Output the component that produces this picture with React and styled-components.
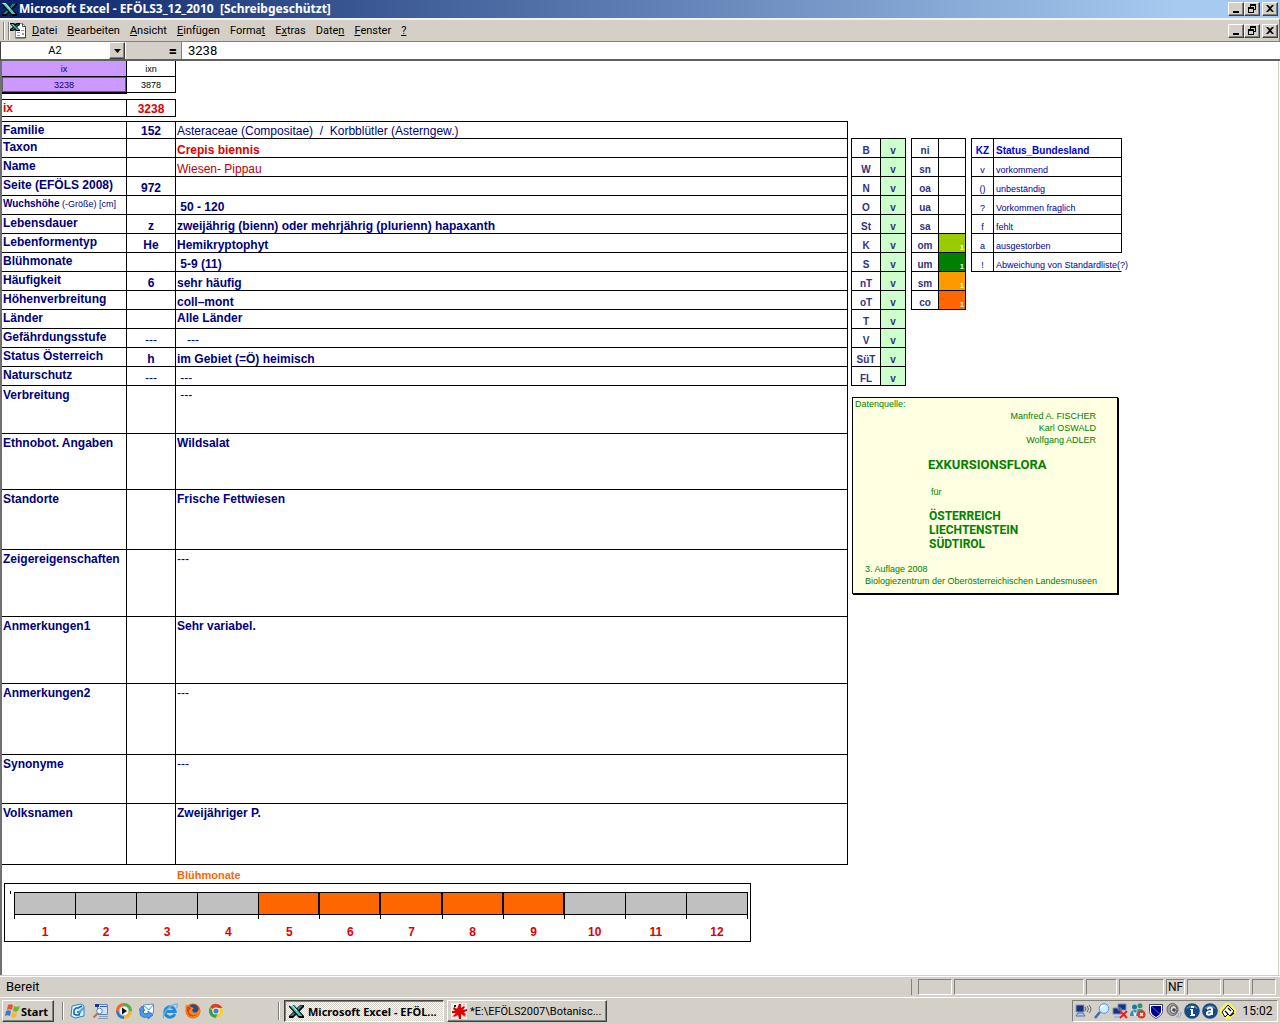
import React, { useState } from "react";
import styled, { createGlobalStyle, css } from "styled-components";

const GlobalStyle = createGlobalStyle`
  *,
  *::before {
    box-sizing: border-box;
  }

  body {
    margin: 0;
    background: #fff;
    font-family: Roboto, "Noto Sans", sans-serif;
    font-size: 11px;
    color: #000;
  }

  button,
  input {
    font: inherit;
    color: inherit;
    margin: 0;
  }
`;

const menus = [
  ["", "D", "atei"],
  ["", "B", "earbeiten"],
  ["", "A", "nsicht"],
  ["", "E", "infügen"],
  ["Forma", "t", ""],
  ["E", "x", "tras"],
  ["Date", "n", ""],
  ["", "F", "enster"],
  ["", "?", ""],
];

const records = [
  { label: "Familie", code: "152", value: "Asteraceae (Compositae)  /  Korbblütler (Asterngew.)", height: 17, plain: true },
  { label: "Taxon", value: "Crepis biennis", color: "#e00000" },
  { label: "Name", value: "Wiesen- Pippau", color: "#c00000", plain: true },
  { label: "Seite (EFÖLS 2008)", code: "972" },
  { label: "Wuchshöhe", note: " (-Größe) [cm]", value: " 50 - 120" },
  { label: "Lebensdauer", code: "z", value: "zweijährig (bienn) oder mehrjährig (plurienn) hapaxanth" },
  { label: "Lebenformentyp", code: "He", value: "Hemikryptophyt" },
  { label: "Blühmonate", value: " 5-9 (11)" },
  { label: "Häufigkeit", code: "6", value: "sehr häufig" },
  { label: "Höhenverbreitung", value: "coll–mont" },
  { label: "Länder", value: "Alle Länder", top: true },
  { label: "Gefährdungsstufe", code: "---", value: "   ---", plain: true },
  { label: "Status Österreich", code: "h", value: "im Gebiet (=Ö) heimisch" },
  { label: "Naturschutz", code: "---", value: " ---", plain: true },
  { label: "Verbreitung", value: " ---", height: 48, top: true, plain: true },
  { label: "Ethnobot. Angaben", value: "Wildsalat", height: 56, top: true },
  { label: "Standorte", value: "Frische Fettwiesen", height: 60, top: true },
  { label: "Zeigereigenschaften", value: "---", height: 67, top: true, plain: true },
  { label: "Anmerkungen1", value: "Sehr variabel.", height: 67, top: true },
  { label: "Anmerkungen2", value: "---", height: 71, top: true, plain: true },
  { label: "Synonyme", value: "---", height: 49, top: true, plain: true },
  { label: "Volksnamen", value: "Zweijähriger P.", height: 61, top: true },
];

const states = ["B", "W", "N", "O", "St", "K", "S", "nT", "oT", "T", "V", "SüT", "FL"];

const zones = [
  { name: "ni" },
  { name: "sn" },
  { name: "oa" },
  { name: "ua" },
  { name: "sa" },
  { name: "om", color: "#99cc00" },
  { name: "um", color: "#008000" },
  { name: "sm", color: "#ff9900" },
  { name: "co", color: "#ff6600" },
];

const statusKeys = [
  ["v", "vorkommend"],
  ["()", "unbeständig"],
  ["?", "Vorkommen fraglich"],
  ["f", "fehlt"],
  ["a", "ausgestorben"],
  ["!", "Abweichung von Standardliste(?)"],
];

const months = [1, 2, 3, 4, 5, 6, 7, 8, 9, 10, 11, 12];

/* ---------- icons ---------- */

const ExcelIcon = () => (
  <svg width="17" height="16" viewBox="0 0 17 16" aria-hidden="true">
    <path d="M12 2h4v2l-5 5-6 6H1v-2l5-5z" fill="#000" />
    <path d="M12 2.500h3L5 13H2z" fill="#188c8c" />
    <path d="M1 2h5l10 11v2h-5L1 4z" fill="#000" />
    <path d="M1 2h4l9.500 11H11z" fill="#48c8c4" />
    <path d="M1.500 2.500h3L9 8" fill="none" stroke="#c4f4f0" />
  </svg>
);

const SheetIcon = () => (
  <svg width="17" height="17" viewBox="0 0 17 17" aria-hidden="true">
    <path d="M5.500 1.500h7l3 3v11h-10z" fill="#fff" stroke="#888" />
    <path d="M12.500 1.500v3h3v11.500h-10" fill="none" stroke="#444" />
    <path d="M7 10h3v1H7zM11 8h3v1h-3zM12 11h2v2h-2zM7 13h3v1H7z" fill="#999" />
    <path d="M0 1h4l1 1 2-1h3v2L7 5l3 3v1H6L5 8 3 9H0V7l3-2-3-3z" fill="#000" />
    <path d="M1 2h2l6 6H7z" fill="#50d0d0" />
    <path d="M8 2h1L3 8H1z" fill="#109090" />
  </svg>
);

const MinIcon = () => (
  <svg width="12" height="10" viewBox="0 0 12 10" aria-hidden="true">
    <path d="M3 7h6v2H3z" />
  </svg>
);

const RestoreIcon = () => (
  <svg width="12" height="10" viewBox="0 0 12 10" aria-hidden="true">
    <path d="M4 0h6v6H8V5h1V2H5v1H4zM2 3h6v6H2zm1 2v3h4V5z" fillRule="evenodd" />
  </svg>
);

const CloseIcon = () => (
  <svg width="12" height="10" viewBox="0 0 12 10" aria-hidden="true">
    <path d="M2 1h2l2 2 2-2h2L7 4.500 10 8H8L6 6 4 8H2l3-3.500z" />
  </svg>
);

const StartFlag = () => (
  <svg width="17" height="16" viewBox="0 0 17 16" aria-hidden="true">
    <path d="M4 2c2-1 3-1 5 0L8 7c-2-1-3-1-5 0z" fill="#e8552c" />
    <path d="M10 3c2 1 3 1 6 0l-2 5c-2 1-3 1-5 0z" fill="#70b32e" />
    <path d="M2 8c2-1 3-1 5 0l-1 5c-2-1-3-1-5 0z" fill="#3d76d8" />
    <path d="M8 9c2 1 3 1 5 0l-1 5c-2 1-3 1-5 0z" fill="#f4bd22" />
  </svg>
);

const OutlookIcon = () => (
  <svg width="16" height="16" viewBox="0 0 16 16" aria-hidden="true">
    <path d="M2 3l9-2 3 2v10l-9 2-4-2z" fill="#d9efff" stroke="#2b83cf" />
    <path d="M9 5H6L4 7v4l2 1h3l1-3H7M8 5l4-2" fill="none" stroke="#1264b4" strokeWidth="1.500" />
    <path d="M8 9l5-5 2 1-5 5z" fill="#4ba1e4" />
  </svg>
);

const DesktopIcon = () => (
  <svg width="16" height="16" viewBox="0 0 16 16" aria-hidden="true">
    <path d="M4.500 1.500h10v10h-10z" fill="#cfe0f8" stroke="#5f84c0" />
    <path d="M2 1h4v3H2z" fill="#1c2fa0" />
    <path d="M7 3.500h7" stroke="#3c64b4" />
    <path d="M6 13.500h9M5 15.500h10" stroke="#8c9cb8" />
    <circle cx="6.500" cy="8" r="2.800" fill="#e8f7ff" stroke="#6b86ad" />
    <path d="M4.500 10.500l-4 4" stroke="#c47034" strokeWidth="2" />
  </svg>
);

const MediaIcon = () => (
  <svg width="16" height="16" viewBox="0 0 16 16" aria-hidden="true">
    <path d="M8 8V0a8 8 0 0 0-8 8z" fill="#f26522" />
    <path d="M8 8h8a8 8 0 0 0-8-8z" fill="#58ab36" />
    <path d="M8 8H0a8 8 0 0 0 8 8z" fill="#287dcb" />
    <path d="M8 8v8a8 8 0 0 0 8-8z" fill="#f8b81e" />
    <circle cx="8" cy="8" r="5" fill="#eef4f6" stroke="#9aa" />
    <path d="M6 4.500l5 3.500-5 3.500z" fill="#111" />
  </svg>
);

const MailIcon = () => (
  <svg width="16" height="16" viewBox="0 0 16 16" aria-hidden="true">
    <path d="M4.500 2l10-1v9l-10 1z" fill="#f4faff" stroke="#5a90d0" />
    <path d="M5 3l5 4 4-5" fill="none" stroke="#6495cc" />
    <path d="M1 7v4c1 3 4 4 8 3v2l5-4-5-4v2.500c-3 1-5 0-5-3h2L3 3 0 7z" fill="#4a9ce8" stroke="#1058a8" strokeWidth=".600" />
  </svg>
);

const ExplorerIcon = () => (
  <svg width="16" height="16" viewBox="0 0 16 16" aria-hidden="true">
    <path d="M12.800 11A5.200 5.200 0 1 1 13.200 8.500H4" fill="none" stroke="#218bd7" strokeWidth="3" />
    <path d="M2 15C-1 12 8 1 15 1c1 1 0 3-1 4" fill="none" stroke="#65b9ee" strokeWidth="1.300" />
  </svg>
);

const FirefoxIcon = () => (
  <svg width="16" height="16" viewBox="0 0 16 16" aria-hidden="true">
    <circle cx="8" cy="8" r="7.500" fill="#e66000" />
    <circle cx="8.500" cy="6.500" r="5" fill="#244a91" />
    <path d="M1 1c1 2 3 1 5 3l3 1-2 2 1 2c3 2 6-1 6-4 3 5-1 10-6 10-6 0-9-7-7-14z" fill="#f18a1b" />
    <path d="M2 4c1-1 3 0 4 1L4 8c0 4 5 6 9 2-3 6-13 4-11-6z" fill="#d74712" />
  </svg>
);

const ChromeIcon = () => (
  <svg width="16" height="16" viewBox="0 0 16 16" aria-hidden="true">
    <circle cx="8" cy="8" r="7" fill="#f9cf28" />
    <path d="M8 8L2 4.300a7 7 0 0 1 12.400.700H8z" fill="#dc3d2d" />
    <path d="M2 4.300A7 7 0 0 0 7.500 15l3-5L8 8 5 9z" fill="#35a351" />
    <circle cx="8" cy="8" r="3.500" fill="#fff" />
    <circle cx="8" cy="8" r="2.600" fill="#3f7fdc" />
  </svg>
);

const SplatIcon = () => (
  <svg width="16" height="16" viewBox="0 0 16 16" aria-hidden="true">
    <path d="M0 0h16v16H0z" fill="#f4f0f0" />
    <path d="M8 1h2v4l3-2 1 1-2 3 4-1v2l-3 1 2 3-2 1-3-2v5H8l-1-4-4 2-1-1 3-3H1V8h3L2 6l1-2 3 2z" fill="#e00000" />
    <path d="M6 5h5v6H5V7z" fill="#e00000" />
    <path d="M3 2h2v2H3z" fill="#302020" />
    <path d="M12 1h2v1h-2zM1 13h2v1H1zM13 13h2v1h-2z" fill="#e8a0a0" />
  </svg>
);

const NetSoundIcon = () => (
  <svg width="18" height="16" viewBox="0 0 18 16" aria-hidden="true">
    <path d="M2 2h8v7H2z" fill="#173174" stroke="#8798bd" />
    <path d="M4 10h5l2 3H2z" fill="#b7c9e7" stroke="#5573a8" />
    <path d="M11 4q2 2 0 4M13 3q3 3 0 6M15 2q4 4 0 8" fill="none" stroke="#666" />
  </svg>
);

const LensIcon = () => (
  <svg width="16" height="16" viewBox="0 0 16 16" aria-hidden="true">
    <path d="M6 9l-5 6" stroke="#426ab0" strokeWidth="2.500" />
    <circle cx="10" cy="5.500" r="4.800" fill="#cceeff" stroke="#5a96cc" />
    <path d="M7 5q1-3 4-2" fill="none" stroke="#fff" strokeWidth="1.500" />
  </svg>
);

const NetDownIcon = () => (
  <svg width="16" height="16" viewBox="0 0 16 16" aria-hidden="true">
    <path d="M6 1h8v6H6zM1 5h8v6H1z" fill="#17327d" stroke="#7890bb" />
    <path d="M2 13h7v2H2z" fill="#a8b9d7" />
    <path d="M8 8l7 7M15 8l-7 7" stroke="#e12525" strokeWidth="2" />
  </svg>
);

const UsersIcon = () => (
  <svg width="16" height="16" viewBox="0 0 16 16" aria-hidden="true">
    <circle cx="4.500" cy="4" r="2.500" fill="#2576a8" />
    <circle cx="10" cy="2.800" r="2.500" fill="#369366" />
    <path d="M0 13c0-4 2-6 5-6 2 0 4 2 5 6z" fill="#378aba" />
    <path d="M7 6h5c2 1 2 4 2 6H9z" fill="#48a070" />
    <path d="M3 8l2 2 2-2-1 5H4z" fill="#e5f2f0" />
    <circle cx="11.500" cy="11.500" r="4" fill="#db3028" />
    <path d="M10 10l3 3M13 10l-3 3" stroke="#fff" strokeWidth="1.300" />
  </svg>
);

const ShieldIcon = () => (
  <svg width="16" height="16" viewBox="0 0 16 16" aria-hidden="true">
    <path d="M1.500 1.500h13v7c0 3-3 5-6.500 7-3.500-2-6.500-4-6.500-7z" fill="#fff" stroke="#404060" />
    <path d="M3 3h10v5c0 3-2 4-5 6-3-2-5-3-5-6z" fill="#000090" />
    <path d="M3 3l9 8" stroke="#5060c0" />
  </svg>
);

const SpeakerIcon = () => (
  <svg width="16" height="16" viewBox="0 0 16 16" aria-hidden="true">
    <ellipse cx="6.500" cy="6.500" rx="5.500" ry="6" fill="#a4a4a4" stroke="#606060" />
    <ellipse cx="7.500" cy="6.500" rx="3.500" ry="4" fill="#dcdcdc" stroke="#555" />
    <circle cx="8" cy="7" r="1.800" fill="#444" />
    <path d="M10 14q3-1 3-4M12 15q4-2 3-6" fill="none" stroke="#8ba0d0" />
  </svg>
);

const InfoIcon = () => (
  <svg width="16" height="16" viewBox="0 0 16 16" aria-hidden="true">
    <circle cx="8" cy="8" r="7.800" fill="#174a83" />
    <path d="M2 6a7 7 0 0 1 12 0q-6-3-12 0z" fill="#5586b5" />
    <path d="M7 3h3v2H7zM6 6h3v5h2v2H6v-1h1V7H6z" fill="#fff" />
  </svg>
);

const AntivirIcon = () => (
  <svg width="16" height="16" viewBox="0 0 16 16" aria-hidden="true">
    <circle cx="8" cy="8" r="7.800" fill="#174a83" />
    <path d="M2 6a7 7 0 0 1 12 0q-6-3-12 0z" fill="#5586b5" />
    <path d="M5 6q4-3 5 0v6M10 8q-6 0-5 3 2 2 5-1" fill="none" stroke="#fff" strokeWidth="2" />
  </svg>
);

const PlugIcon = () => (
  <svg width="16" height="16" viewBox="0 0 16 16" aria-hidden="true">
    <path d="M6 0h4l6 7v3l-6 6H6l-6-6V6z" fill="#f8f458" />
    <path d="M2 9l6-7 6 6-4 5-2-2-3 3z" fill="#fff" stroke="#000" />
    <path d="M5 8l3 3M8 5l3 3M10 13l4-3" stroke="#000" strokeWidth="1.300" />
  </svg>
);

const launchers = [
  ["Outlook", OutlookIcon],
  ["Desktop", DesktopIcon],
  ["Media Player", MediaIcon],
  ["Mail", MailIcon],
  ["Internet Explorer", ExplorerIcon],
  ["Firefox", FirefoxIcon],
  ["Chrome", ChromeIcon],
];

const trayIcons = [
  NetSoundIcon,
  LensIcon,
  NetDownIcon,
  UsersIcon,
  ShieldIcon,
  SpeakerIcon,
  InfoIcon,
  AntivirIcon,
  PlugIcon,
];

const statusPanels = [34, 130, 31, 45, 19, 34, 27, 24];

const WindowControls = () => (
  <Controls>
    <WinButton aria-label="Minimieren"><MinIcon /></WinButton>
    <WinButton aria-label="Wiederherstellen"><RestoreIcon /></WinButton>
    <WinButton aria-label="Schließen" $apart><CloseIcon /></WinButton>
  </Controls>
);

const RecordTable = () => (
  <Table $top>
    <tbody>
      {records.map((r) => (
        <tr key={r.label}>
          <LabelCell scope="row" $h={r.height} $small={!!r.note}>
            {r.label}
            {r.note && <Note>{r.note}</Note>}
          </LabelCell>
          <CodeCell $plain={r.code === "---"}>{r.code}</CodeCell>
          <ValueCell $top={r.top} $tall={r.height > 19} $color={r.color} $plain={r.plain}>
            {r.value}
          </ValueCell>
        </tr>
      ))}
    </tbody>
  </Table>
);

const MonthChart = () => (
  <Chart>
    <Bars>
      {months.map((m) => (
        <Month key={m} $active={m >= 5 && m <= 9}>
          {m}
        </Month>
      ))}
    </Bars>
  </Chart>
);

const SourceBox = () => (
  <Source>
    <SourceHead>Datenquelle:</SourceHead>
    <Authors>
      Manfred A. FISCHER
      <br />
      Karl OSWALD
      <br />
      Wolfgang ADLER
    </Authors>
    <BookTitle>EXKURSIONSFLORA</BookTitle>
    <BookFor>für</BookFor>
    <Regions>
      ÖSTERREICH
      <br />
      LIECHTENSTEIN
      <br />
      SÜDTIROL
    </Regions>
    <Edition>
      3. Auflage 2008
      <br />
      Biologiezentrum der Oberösterreichischen Landesmuseen
    </Edition>
  </Source>
);

const App = () => {
  const [cellName, setCellName] = useState("A2");
  const [formula, setFormula] = useState("3238");

  return (
    <Window>
      <GlobalStyle />
      <TitleBar>
        <ExcelIcon />
        <Title>Microsoft Excel - EFÖLS3_12_2010  [Schreibgeschützt]</Title>
        <WindowControls />
      </TitleBar>

      <MenuBar>
        <Grip />
        <SheetIcon />
        <Menus>
          {menus.map(([before, key, after]) => (
            <MenuButton key={before + key + after}>
              {before}
              <u>{key}</u>
              {after}
            </MenuButton>
          ))}
        </Menus>
        <WindowControls />
      </MenuBar>

      <FormulaBar>
        <NameInput
          aria-label="Namenfeld"
          value={cellName}
          onChange={(e) => setCellName(e.target.value)}
        />
        <DropButton aria-label="Namen anzeigen">
          <svg width="7" height="4" viewBox="0 0 7 4" aria-hidden="true">
            <path d="M0 0h7L3.500 4z" />
          </svg>
        </DropButton>
        <EqualsButton>=</EqualsButton>
        <FormulaInput
          aria-label="Bearbeitungsleiste"
          value={formula}
          onChange={(e) => setFormula(e.target.value)}
        />
      </FormulaBar>

      <Sheet>
        <Record>
          <IndexTable>
            <tbody>
              <tr>
                <IndexCell $wide $purple>ix</IndexCell>
                <IndexCell>ixn</IndexCell>
              </tr>
              <tr>
                <IndexCell $wide $purple $selected>3238</IndexCell>
                <IndexCell>3878</IndexCell>
              </tr>
            </tbody>
          </IndexTable>
          <CurrentTable $top>
            <tbody>
              <tr>
                <LabelCell scope="row" $h={17} $color="#e00000">ix</LabelCell>
                <CodeCell $color="#e00000">3238</CodeCell>
              </tr>
            </tbody>
          </CurrentTable>
          <RecordTable />
          <ChartTitle>Blühmonate</ChartTitle>
          <MonthChart />
        </Record>

        <Side>
          <KeyTables>
            <KeyTable>
              <tbody>
                {states.map((s) => (
                  <tr key={s}>
                    <KeyCell $w={29}>{s}</KeyCell>
                    <KeyCell $w={25} $bg="#ccffcc">v</KeyCell>
                  </tr>
                ))}
              </tbody>
            </KeyTable>
            <KeyTable>
              <tbody>
                {zones.map((z) => (
                  <tr key={z.name}>
                    <KeyCell $w={27}>{z.name}</KeyCell>
                    <ZoneCell $w={27} $bg={z.color}>{z.color && "1"}</ZoneCell>
                  </tr>
                ))}
              </tbody>
            </KeyTable>
            <KeyTable>
              <thead>
                <tr>
                  <StatusKey as="th" $head>KZ</StatusKey>
                  <StatusText as="th" $head>Status_Bundesland</StatusText>
                </tr>
              </thead>
              <tbody>
                {statusKeys.map(([key, text]) => (
                  <tr key={key}>
                    <StatusKey>{key}</StatusKey>
                    <StatusText $open={key === "!"}>{text}</StatusText>
                  </tr>
                ))}
              </tbody>
            </KeyTable>
          </KeyTables>
          <SourceBox />
        </Side>
      </Sheet>

      <StatusBar>
        <Ready>Bereit</Ready>
        <Panels>
          {statusPanels.map((w, i) => (
            <Panel key={i} $w={w}>{i === 4 && "NF"}</Panel>
          ))}
        </Panels>
      </StatusBar>

      <TaskBar>
        <StartButton>
          <StartFlag />
          Start
        </StartButton>
        <QuickLaunch>
          {launchers.map(([name, Icon]) => (
            <LaunchButton key={name} aria-label={name}>
              <Icon />
            </LaunchButton>
          ))}
        </QuickLaunch>
        <Tasks>
          <TaskButton $active>
            <ExcelIcon />
            <span>Microsoft Excel - EFÖL...</span>
          </TaskButton>
          <TaskButton>
            <SplatIcon />
            <span>*E:\EFÖLS2007\Botanisc...</span>
          </TaskButton>
        </Tasks>
        <Tray>
          {trayIcons.map((Icon, i) => (
            <Icon key={i} />
          ))}
          <Clock>15:02</Clock>
        </Tray>
      </TaskBar>
    </Window>
  );
};

/* ---------- window frame ---------- */

const raised = css`
  background: #d4d0c8;
  border: 1px solid;
  border-color: #fff #404040 #404040 #fff;
  box-shadow: inset -1px -1px 0 #808080;
`;

const boldCaption = css`
  font-family: "Noto Sans", "Open Sans", sans-serif;
  font-weight: 700;
`;

const Window = styled.div`
  display: flex;
  flex-direction: column;
  min-height: 100vh;
`;

const TitleBar = styled.header`
  display: flex;
  align-items: center;
  height: 18px;
  padding: 0 2px 0 1px;
  background: linear-gradient(90deg, #0a246a 0%, #a6caf0 92%);
  color: #fff;
`;

const Title = styled.span`
  ${boldCaption}
  flex: 1;
  padding-left: 1px;
  font-size: 12px;
  line-height: 16px;
  white-space: pre;
`;

const Controls = styled.div`
  display: flex;
  flex: none;
`;

const WinButton = styled.button`
  ${raised}
  display: flex;
  width: 16px;
  height: 14px;
  padding: 1px;
  margin-left: ${(p) => (p.$apart ? "2px" : "0")};
`;

const MenuBar = styled.nav`
  display: flex;
  align-items: center;
  height: 24px;
  padding: 0 1px 0 3px;
  background: #d4d0c8;
  border-top: 2px solid #f4f2ee;
  border-right: 1px solid #808080;
  border-bottom: 1px solid #808080;
`;

const Grip = styled.span`
  width: 6px;
  height: 18px;
  margin-right: 1px;
  border: solid #808080;
  border-width: 0 1px;
  box-shadow: inset 1px 0 0 #fff, 1px 0 0 #fff;
`;

const Menus = styled.div`
  display: flex;
  flex: 1;
`;

const MenuButton = styled.button`
  padding: 2px 5px;
  border: none;
  background: none;
  font-size: 11px;
  line-height: 14px;
`;

const FormulaBar = styled.div`
  display: flex;
  height: 19px;
  background: #fff;
  border-left: 1px solid #404040;
  border-bottom: 2px solid #606060;
`;

const NameInput = styled.input`
  width: 108px;
  border: none;
  padding: 0;
  text-align: center;
  outline: none;
`;

const DropButton = styled.button`
  ${raised}
  display: flex;
  align-items: center;
  justify-content: center;
  width: 16px;
  padding: 0;
`;

const EqualsButton = styled.button`
  width: 57px;
  padding: 0 4px;
  border: none;
  border-left: 1px solid #fff;
  border-right: 1px solid #808080;
  background: #d4d0c8;
  font-size: 14px;
  font-weight: 900;
  line-height: 16px;
  text-align: right;
`;

const FormulaInput = styled.input`
  flex: 1;
  min-width: 0;
  padding: 0 6px;
  border: none;
  font-size: 13px;
  outline: none;
`;

/* ---------- sheet ---------- */

const Sheet = styled.main`
  display: flex;
  flex: 1;
  align-items: flex-start;
  margin-right: 1px;
  border-left: 2px solid #707070;
  border-right: 1px solid #d4d0c8;
  font-family: "Liberation Sans", Arial, sans-serif;
  color: #000080;
`;

const Record = styled.section`
  flex: none;
  width: 846px;
`;

const Table = styled.table`
  width: 100%;
  border-spacing: 0;
  border-top: ${(p) => (p.$top ? "1px solid #000" : "none")};
  font-size: 12px;
  line-height: 16px;
`;

const IndexTable = styled(Table)`
  width: 174px;
  margin-bottom: 6px;
`;

const CurrentTable = styled(Table)`
  width: 174px;
  margin-bottom: 4px;
`;

const cell = css`
  padding: 0 1px;
  border: solid #000;
  border-width: 0 1px 1px 0;
  white-space: pre;
`;

const IndexCell = styled.td`
  ${cell}
  width: ${(p) => (p.$wide ? "125px" : "49px")};
  height: 16px;
  background: ${(p) => (p.$purple ? "#cc99ff" : "#fff")};
  color: ${(p) => (p.$purple ? "#000080" : "#000")};
  font-size: 9px;
  line-height: 14px;
  text-align: center;
  ${(p) => p.$selected && "box-shadow: inset 0 0 0 1px #606060, 0 1px 0 #000;"}
`;

const LabelCell = styled.th`
  ${cell}
  width: 125px;
  height: ${(p) => p.$h || 19}px;
  padding-top: ${(p) => (p.$h > 19 ? "1px" : "0")};
  color: ${(p) => p.$color || "#000080"};
  font-size: ${(p) => (p.$small ? "10px" : "12px")};
  text-align: left;
  vertical-align: top;
`;

const Note = styled.span`
  font-size: 9px;
  font-weight: 400;
`;

const CodeCell = styled.td`
  ${cell}
  width: 49px;
  color: ${(p) => p.$color || "#000080"};
  font-weight: ${(p) => (p.$plain ? 400 : 700)};
  line-height: 14px;
  text-align: center;
  vertical-align: bottom;
`;

const ValueCell = styled.td`
  ${cell}
  padding-top: ${(p) => (p.$tall ? "1px" : "0")};
  color: ${(p) => p.$color || "#000080"};
  font-weight: ${(p) => (p.$plain ? 400 : 700)};
  line-height: ${(p) => (p.$top ? "16px" : "14px")};
  vertical-align: ${(p) => (p.$top ? "top" : "bottom")};
`;

const ChartTitle = styled.h2`
  margin: 0;
  padding: 3px 0 0 175px;
  color: #ff6600;
  font-size: 11px;
  line-height: 15px;
`;

const Chart = styled.div`
  width: 747px;
  margin-left: 2px;
  padding: 8px 2px 0 9px;
  border: 1px solid #000;
  background: linear-gradient(#000, #000) 5px 7px / 1px 3px no-repeat;
`;

const Bars = styled.div`
  display: grid;
  grid-template-columns: repeat(12, 1fr);
  background: linear-gradient(#000, #000) 100% 0 / 1px 27px no-repeat;
  padding-right: 1px;
`;

/* the left edge of each bar runs on below it as the axis tick */
const Month = styled.div`
  padding: 0 0 1px 1px;
  background: linear-gradient(#000, #000) 0 0 / 1px 27px no-repeat;
  color: #e00000;
  font-size: 12px;
  font-weight: 700;
  line-height: 16px;
  text-align: center;

  &::before {
    content: "";
    display: block;
    height: 23px;
    margin-bottom: 9px;
    border: solid #000;
    border-width: 1px ${(p) => (p.$active ? "1px" : "0")} 1px 0;
    background: ${(p) => (p.$active ? "#ff6600" : "#c0c0c0")};
  }
`;

const Side = styled.aside`
  padding: 77px 0 0 3px;
`;

const KeyTables = styled.div`
  display: flex;
  align-items: flex-start;
  gap: 5px;
`;

const KeyTable = styled.table`
  border-spacing: 0;
  border: solid #000;
  border-width: 1px 0 0 1px;
  font-size: 10px;
  line-height: 12px;

  &:last-child {
    border-top: none;
  }

  &:last-child th {
    height: 20px;
    border-top: 1px solid #000;
  }
`;

const KeyCell = styled.td`
  ${cell}
  width: ${(p) => p.$w}px;
  height: 19px;
  background: ${(p) => p.$bg || "#fff"};
  color: #333380;
  font-weight: 700;
  text-align: center;
  vertical-align: bottom;
`;

const ZoneCell = styled(KeyCell)`
  color: #fff;
  font-size: 7px;
  line-height: 8px;
  text-align: right;
`;

const StatusKey = styled.td`
  ${cell}
  width: 22px;
  height: 19px;
  color: ${(p) => (p.$head ? "#0000e0" : "#0000a0")};
  font-size: ${(p) => (p.$head ? "10px" : "9px")};
  text-align: center;
  vertical-align: bottom;
`;

const StatusText = styled.td`
  ${cell}
  width: 128px;
  max-width: 128px;
  padding-left: 2px;
  color: ${(p) => (p.$head ? "#0000e0" : "#0000a0")};
  font-size: ${(p) => (p.$head ? "10px" : "9px")};
  text-align: left;
  vertical-align: bottom;
  ${(p) => p.$open && "border-right-color: transparent;"}
`;

/* ---------- source note ---------- */

const Source = styled.section`
  width: 266px;
  margin: 11px 0 0 1px;
  padding: 1px 12px 6px;
  border: 1px solid #000;
  box-shadow: 1px 1px 0 #000;
  background: #ffffe1;
  color: #008000;
  font-size: 9px;
  line-height: 12px;

  p,
  h3 {
    margin: 0;
  }
`;

const SourceHead = styled.p`
  text-indent: -10px;
  line-height: 11px;
`;

const Authors = styled.p`
  padding-right: 9px;
  text-align: right;
`;

const BookTitle = styled.h3`
  && {
    margin-top: 11px;
  }
  padding-left: 63px;
  font-family: Roboto, "Noto Sans", sans-serif;
  font-size: 13px;
  line-height: 16px;
`;

const BookFor = styled.p`
  && {
    margin-top: 13px;
  }
  padding-left: 66px;
`;

const Regions = styled.p`
  && {
    margin-top: 11px;
  }
  padding-left: 64px;
  font-family: Roboto, "Noto Sans", sans-serif;
  font-size: 12px;
  font-weight: 700;
  line-height: 14px;
`;

const Edition = styled.p`
  && {
    margin-top: 12px;
  }
  white-space: nowrap;
`;

/* ---------- status bar and task bar ---------- */

const StatusBar = styled.footer`
  display: flex;
  align-items: center;
  justify-content: space-between;
  height: 22px;
  padding: 0 4px 0 6px;
  border-top: 1px solid #d4d0c8;
  box-shadow: inset 0 1px 0 #fff;
  background: #d4d0c8;
`;

const Ready = styled.span`
  font-size: 13px;
`;

const Panels = styled.div`
  display: flex;
  gap: 2px;
  padding-left: 6px;
  border-left: 1px solid #808080;
`;

const Panel = styled.span`
  width: ${(p) => p.$w}px;
  height: 16px;
  border: 1px solid;
  border-color: #808080 #fff #fff #808080;
  font-size: 12px;
  line-height: 14px;
  text-align: center;
`;

const TaskBar = styled.footer`
  display: flex;
  align-items: center;
  height: 27px;
  padding: 0 2px;
  border-top: 1px solid #fff;
  background: #d4d0c8;
`;

const StartButton = styled.button`
  ${raised}
  ${boldCaption}
  display: flex;
  align-items: center;
  width: 52px;
  height: 22px;
  padding: 0 1px;
  font-size: 11px;
`;

const QuickLaunch = styled.div`
  display: flex;
  gap: 7px;
  width: 217px;
  margin-left: 8px;
  padding: 1px 0 1px 7px;
  border-left: 1px solid #808080;
  border-right: 1px solid #808080;
  box-shadow: inset 1px 0 0 #fff, 1px 0 0 #fff;
`;

const LaunchButton = styled.button`
  display: flex;
  padding: 0;
  border: none;
  background: none;
`;

const Tasks = styled.div`
  display: flex;
  flex: 1;
  gap: 3px;
  margin-left: 5px;
`;

const TaskButton = styled.button`
  ${raised}
  display: flex;
  align-items: center;
  gap: 3px;
  width: 160px;
  height: 22px;
  padding: 0 3px;
  font-size: 11px;
  white-space: nowrap;

  ${(p) =>
    p.$active &&
    css`
      ${boldCaption}
      background: repeating-conic-gradient(#fff 0 25%, #d4d0c8 0 50%) 0 0 / 2px 2px;
      border-color: #404040 #fff #fff #404040;
      box-shadow: inset 1px 1px 0 #808080;
    `}
`;

const Tray = styled.div`
  display: flex;
  align-items: center;
  gap: 2px;
  width: 206px;
  height: 22px;
  padding-left: 1px;
  border: 1px solid;
  border-color: #808080 #fff #fff #808080;
`;

const Clock = styled.time`
  flex: 1;
  font-size: 12px;
  text-align: center;
`;

export default App;
